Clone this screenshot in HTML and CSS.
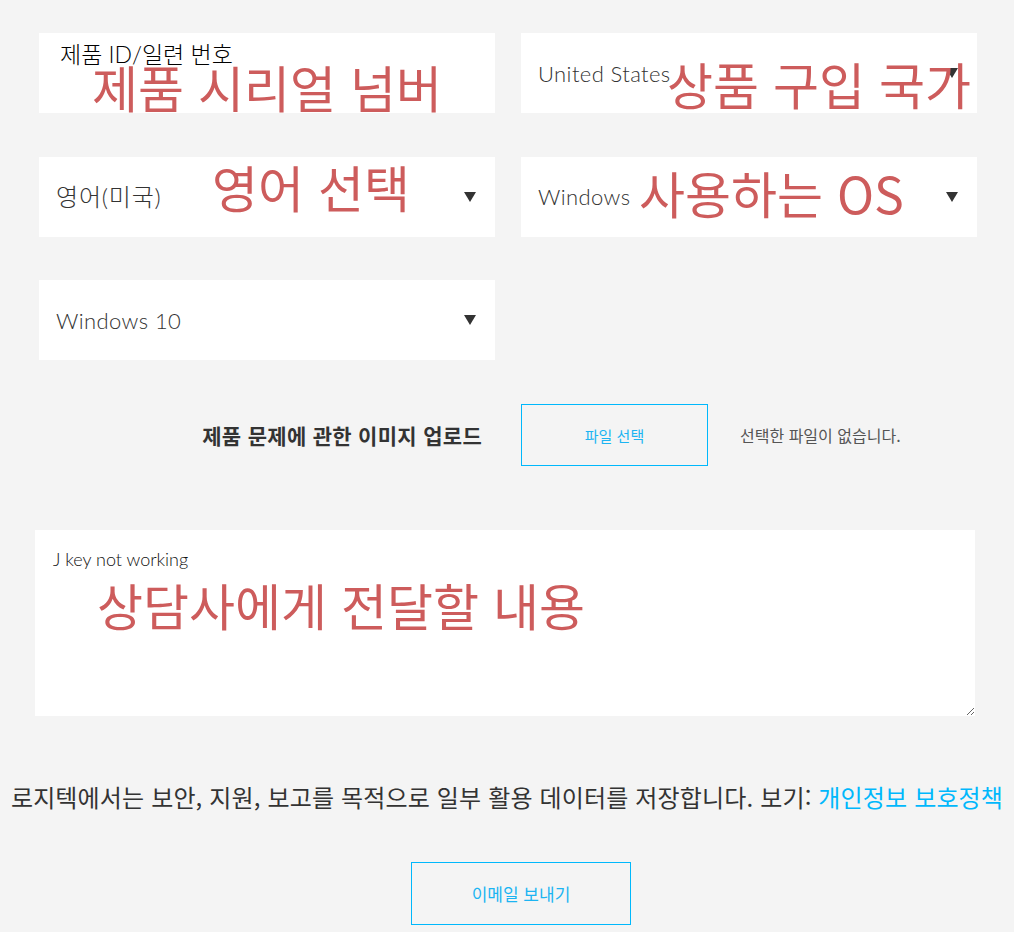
FILE: index.html
```html
<!DOCTYPE html>
<html lang="ko">
<head>
    <meta charset="UTF-8">
    <meta name="viewport" content="width=device-width, initial-scale=1.0">
    <title>고객 지원 문의</title>
    <link rel="stylesheet" href="styles.css">
</head>
<body>
    <div class="page">
        <form class="support-form">
            <div class="fields">
                <div class="field">
                    <input class="text-input" type="text" value="제품 ID/일련 번호">
                </div>
                <div class="field">
                    <select class="select-input">
                        <option>United States</option>
                    </select>
                    <span class="arrow"></span>
                </div>
                <div class="field">
                    <select class="select-input select-ko">
                        <option>영어(미국)</option>
                    </select>
                    <span class="arrow"></span>
                </div>
                <div class="field">
                    <select class="select-input">
                        <option>Windows</option>
                    </select>
                    <span class="arrow"></span>
                </div>
                <div class="field">
                    <select class="select-input">
                        <option>Windows 10</option>
                    </select>
                    <span class="arrow"></span>
                </div>
            </div>

            <div class="upload-row">
                <label class="upload-label">제품 문제에 관한 이미지 업로드</label>
                <div class="upload-control">
                    <button type="button" class="file-btn">파일 선택</button>
                    <span class="file-name">선택한 파일이 없습니다.</span>
                </div>
            </div>

            <textarea class="message">J key not working</textarea>

            <p class="privacy">로지텍에서는 보안, 지원, 보고를 목적으로 일부 활용 데이터를 저장합니다. 보기: <a href="#">개인정보 보호정책</a></p>

            <button type="submit" class="submit-btn">이메일 보내기</button>
        </form>

        <!-- annotations drawn over the form -->
        <span class="note note-serial">제품 시리얼 넘버</span>
        <span class="note note-country">상품 구입 국가</span>
        <span class="note note-lang">영어 선택</span>
        <span class="note note-os">사용하는 OS</span>
        <span class="note note-message">상담사에게 전달할 내용</span>
    </div>
</body>
</html>
```

FILE: styles.css
```css
* {
    box-sizing: border-box;
}
body {
    margin: 0;
    background-color: #f4f4f4;
    font-family: "Noto Sans CJK KR", sans-serif;
    color: #333;
}
.page {
    position: relative;
    width: 1014px;
    min-height: 932px;
}
.support-form {
    padding: 33px 37px 0 35px;
}
.fields {
    display: grid;
    grid-template-columns: 456px 456px;
    column-gap: 26px;
    row-gap: 43.5px;
    margin: 0 2px 0 4px;
}
.field {
    position: relative;
    height: 80px;
    background-color: white;
}
.text-input, .select-input {
    width: 100%;
    height: 80px;
    border: none;
    outline: none;
    background-color: white;
    font-family: Lato, "Noto Sans CJK KR", sans-serif;
    font-size: 22px;
    font-weight: 300;
    color: #333;
    -webkit-appearance: none;
    appearance: none;
}
.text-input {
    padding: 5px 21px 46px;
    font-size: 23px;
    color: #000;
}
.select-input {
    padding: 0 40px 0 17px;
    letter-spacing: 0.4px;
}
.select-ko {
    font-size: 24px;
    letter-spacing: 0.8px;
}
.arrow {
    position: absolute;
    right: 19px;
    top: 35px;
    width: 0;
    height: 0;
    border-left: 6px solid transparent;
    border-right: 6px solid transparent;
    border-top: 10px solid #333;
    pointer-events: none;
}
.upload-row {
    display: grid;
    grid-template-columns: 456px 456px;
    column-gap: 26px;
    align-items: center;
    margin: 44px 2px 0 4px;
}
.upload-label {
    text-align: right;
    padding-right: 13px;
    font-size: 21px;
    font-weight: bold;
    letter-spacing: 0.3px;
    color: #333;
}
.upload-control {
    display: flex;
    align-items: center;
    gap: 32px;
}
.file-btn, .submit-btn {
    background-color: transparent;
    border: 1px solid #00b8fc;
    color: #1cb4f2;
    font-family: "Noto Sans CJK KR", sans-serif;
    cursor: pointer;
}
.file-btn {
    width: 187px;
    height: 62px;
    font-size: 15px;
}
.file-name {
    font-size: 16px;
    color: #555;
}
.message {
    display: block;
    width: 940px;
    height: 186px;
    margin-top: 64px;
    padding: 18px 18px;
    border: none;
    outline: none;
    background-color: white;
    font-family: Lato, sans-serif;
    font-size: 18px;
    font-weight: 300;
    color: #111;
}
.privacy {
    margin: 66px -37px 0 -35px;
    text-align: center;
    white-space: nowrap;
    font-size: 24px;
    line-height: 30px;
    letter-spacing: 0.15px;
    color: #333;
}
.privacy a {
    color: #00b8fc;
    text-decoration: none;
}
.submit-btn {
    display: block;
    width: 220px;
    height: 63px;
    margin: 50px 0 0 376px;
    font-size: 17px;
}
.note {
    position: absolute;
    font-family: "Noto Sans CJK KR", sans-serif;
    font-size: 50px;
    line-height: 1;
    color: #cd5c5c;
    white-space: nowrap;
}
.note-serial { left: 92px; top: 61px; }
.note-country { left: 667px; top: 58px; }
.note-lang { left: 212px; top: 161px; }
.note-os { left: 639px; top: 167px; }
.note-message { left: 97px; top: 579px; }
```
